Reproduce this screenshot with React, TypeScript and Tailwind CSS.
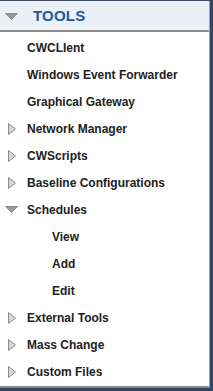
const items: { label: string; kind: "leaf" | "closed" | "open" | "sub" }[] = [
  { label: "CWCLIent", kind: "leaf" },
  { label: "Windows Event Forwarder", kind: "leaf" },
  { label: "Graphical Gateway", kind: "leaf" },
  { label: "Network Manager", kind: "closed" },
  { label: "CWScripts", kind: "closed" },
  { label: "Baseline Configurations", kind: "closed" },
  { label: "Schedules", kind: "open" },
  { label: "View", kind: "sub" },
  { label: "Add", kind: "sub" },
  { label: "Edit", kind: "sub" },
  { label: "External Tools", kind: "closed" },
  { label: "Mass Change", kind: "closed" },
  { label: "Custom Files", kind: "closed" },
];

function ClosedArrow() {
  return (
    <svg width="8" height="12" viewBox="0 0 8 12" className="shrink-0">
      <path d="M0.5 0.5 L7.5 6 L0.5 11.5 Z" fill="#d6d6d6" stroke="#8c8c8c" strokeWidth="1" />
    </svg>
  );
}

function OpenArrow() {
  return (
    <svg width="13" height="7" viewBox="0 0 13 7" className="shrink-0">
      <path d="M0.5 0.5 L12.5 0.5 L6.5 6.5 Z" fill="#9a9a9a" stroke="#8a8a8a" strokeWidth="1" />
    </svg>
  );
}

export default function App() {
  return (
    <div
      className="w-[213px] h-[391px] flex flex-col bg-white border-t border-t-[#3a4a5c] border-r-[3px] border-r-[#2d4663] border-b-[3px] border-b-[#2d4663] overflow-hidden"
      style={{ fontFamily: '"Liberation Sans", Arial, sans-serif' }}
    >
      <div className="flex flex-col flex-1 border-r border-r-[#9aa3ad] border-b-2 border-b-[#8d8d8d]">
        <div className="h-[31px] flex items-center bg-[#eaf0f6] border-b-2 border-b-[#8a8a8a] pl-[5px] pt-[1px]">
          <OpenArrow />
          <span className="ml-[15px] text-[15px] font-bold text-[#1d5b98] tracking-[0.2px]">TOOLS</span>
        </div>
        <div className="flex flex-col pt-[2px]">
          {items.map((it) => (
            <div key={it.label} className="h-[27px] flex items-center">
              {it.kind === "closed" && (
                <span className="w-[27px] pl-[8px] flex items-center">
                  <ClosedArrow />
                </span>
              )}
              {it.kind === "open" && (
                <span className="w-[27px] pl-[5px] flex items-center">
                  <OpenArrow />
                </span>
              )}
              {it.kind === "leaf" && <span className="w-[27px]" />}
              {it.kind === "sub" && <span className="w-[52px]" />}
              <span className="text-[12px] font-bold text-[#222222] whitespace-nowrap">{it.label}</span>
            </div>
          ))}
        </div>
      </div>
    </div>
  );
}
